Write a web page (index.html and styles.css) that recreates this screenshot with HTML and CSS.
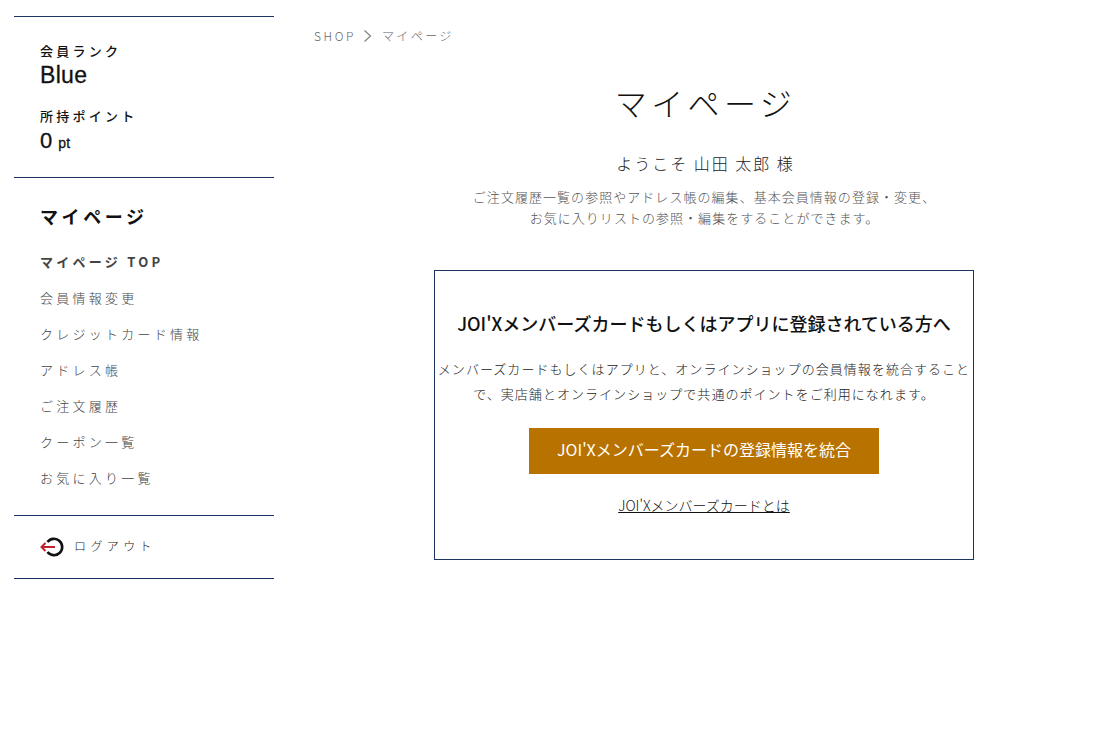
FILE: index.html
```html
<!DOCTYPE html>
<html lang="ja">
<head>
  <meta charset="UTF-8">
  <title>マイページ</title>
  <link rel="stylesheet" href="styles.css">
</head>
<body>
  <div class="page">
    <aside class="side">
      <div class="status">
        <p class="status-label">会員ランク</p>
        <p class="status-rank">Blue</p>
        <p class="status-label status-label-point">所持ポイント</p>
        <p class="status-point">0 <small>pt</small></p>
      </div>
      <nav class="side-nav">
        <h2>マイページ</h2>
        <ul>
          <li class="current"><a href="#">マイページ TOP</a></li>
          <li><a href="#">会員情報変更</a></li>
          <li><a href="#">クレジットカード情報</a></li>
          <li><a href="#">アドレス帳</a></li>
          <li><a href="#">ご注文履歴</a></li>
          <li><a href="#">クーポン一覧</a></li>
          <li><a href="#">お気に入り一覧</a></li>
        </ul>
      </nav>
      <a class="logout" href="#">
        <svg class="logout-icon" width="24" height="20" viewBox="0 0 24 20" fill="none">
          <path d="M7.500 5A8.200 8.200 0 1 1 7.500 15" stroke="#111" stroke-width="2.600"/>
          <path d="M1 10H15M5.500 6L1.500 10L5.500 14" stroke="#c0222c" stroke-width="2"/>
        </svg>
        <span>ログアウト</span>
      </a>
    </aside>
    <main class="main">
      <div class="crumb">
        <span class="crumb-shop">SHOP</span>
        <svg class="crumb-arrow" width="9" height="14" viewBox="0 0 9 14" fill="none"><path d="M1.500 1.500L7.500 7L1.500 12.500" stroke="#888" stroke-width="1.300"/></svg>
        <span>マイページ</span>
      </div>
      <h1>マイページ</h1>
      <p class="welcome">ようこそ 山田 太郎 様</p>
      <p class="lead">ご注文履歴一覧の参照やアドレス帳の編集、基本会員情報の登録・変更、<br>お気に入りリストの参照・編集をすることができます。</p>
      <section class="card">
        <h3>JOI'Xメンバーズカードもしくはアプリに登録されている方へ</h3>
        <p>メンバーズカードもしくはアプリと、オンラインショップの会員情報を統合することで、実店舗とオンラインショップで共通のポイントをご利用になれます。</p>
        <a class="btn" href="#">JOI'Xメンバーズカードの登録情報を統合</a>
        <a class="card-link" href="#">JOI'Xメンバーズカードとは</a>
      </section>
    </main>
  </div>
</body>
</html>
```

FILE: styles.css
```css
* {
  box-sizing: border-box;
}
html, body {
  margin: 0;
  padding: 0;
}
body {
  font-family: "Noto Sans CJK JP", "Noto Sans", sans-serif;
  background-color: #fff;
  color: #111;
}
a {
  color: inherit;
  text-decoration: none;
}
p, h1, h2, h3, ul {
  margin: 0;
  padding: 0;
}
.page {
  display: flex;
  align-items: flex-start;
  padding: 16px 0 0 14px;
}

/* side */
.side {
  flex: none;
  width: 260px;
  border-top: 1px solid #1b3560;
}
.status {
  height: 161px;
  padding: 25px 0 0 26px;
  border-bottom: 1px solid #1b3560;
}
.status-label {
  font-size: 13px;
  line-height: 18px;
  letter-spacing: 3.25px;
  font-weight: 500;
}
.status-label-point {
  margin-top: 17px;
}
.status-rank {
  padding-top: 1px;
  font-family: "Liberation Sans", sans-serif;
  font-size: 23px;
  line-height: 29px;
  letter-spacing: 0.3px;
  -webkit-text-stroke: 0.3px #111;
}
.status-point {
  font-family: "Liberation Sans", sans-serif;
  font-size: 22px;
  line-height: 31px;
  -webkit-text-stroke: 0.3px #111;
}
.status-point small {
  font-size: 14px;
}
.side-nav {
  height: 338px;
  padding: 25px 0 0 26px;
  border-bottom: 1px solid #1b3560;
}
.side-nav h2 {
  font-size: 18px;
  line-height: 26px;
  letter-spacing: 3.6px;
  font-weight: 700;
}
.side-nav ul {
  list-style: none;
  margin-top: 15px;
}
.side-nav li {
  height: 36px;
  font-size: 13px;
  line-height: 36px;
  letter-spacing: 3.25px;
  font-weight: 300;
  color: #444;
}
.side-nav li.current {
  font-weight: 700;
  color: #444;
}
.logout {
  display: flex;
  align-items: center;
  gap: 10px;
  height: 63px;
  padding: 0 0 4px 26px;
  border-bottom: 1px solid #1b3560;
  font-size: 12px;
  letter-spacing: 4.4px;
  font-weight: 300;
  color: #222;
}
.logout-icon {
  margin-top: 3px;
}

/* main */
.main {
  flex: 1;
  padding-left: 40px;
  text-align: center;
}
.crumb {
  display: flex;
  align-items: center;
  gap: 7px;
  height: 39px;
  font-size: 12px;
  letter-spacing: 2.4px;
  font-weight: 300;
  color: #666;
}
.crumb-shop {
  letter-spacing: 2.6px;
}
.crumb-arrow {
  margin-right: 3px;
}
h1 {
  width: 780px;
  margin-top: 19px;
  padding-left: 3px;
  font-size: 32px;
  line-height: 56px;
  font-weight: 300;
  letter-spacing: 4.4px;
}
.welcome {
  width: 780px;
  margin-top: 21px;
  padding-left: 3px;
  font-size: 16px;
  line-height: 24px;
  letter-spacing: 2px;
  font-weight: 300;
  color: #222;
}
.lead {
  width: 780px;
  margin-top: 11px;
  padding-left: 1px;
  font-size: 13px;
  line-height: 21px;
  letter-spacing: 1.04px;
  font-weight: 300;
  color: #555;
}
.card {
  width: 540px;
  height: 290px;
  margin: 42px 0 0 120px;
  padding: 37px 0 0;
  border: 1px solid #1b3560;
}
.card h3 {
  font-size: 18px;
  line-height: 30px;
  font-weight: 500;
}
.card p {
  margin-top: 18px;
  font-size: 13px;
  line-height: 25px;
  letter-spacing: 1.04px;
  font-weight: 300;
  color: #222;
}
.btn {
  display: block;
  width: 350px;
  height: 46px;
  margin: 22px auto 0;
  background-color: #b87200;
  color: #fff;
  font-size: 16px;
  line-height: 42px;
  font-weight: 400;
}
.card-link {
  display: inline-block;
  margin-top: 20px;
  font-size: 14px;
  line-height: 22px;
  font-weight: 300;
  text-decoration: underline;
}
```
